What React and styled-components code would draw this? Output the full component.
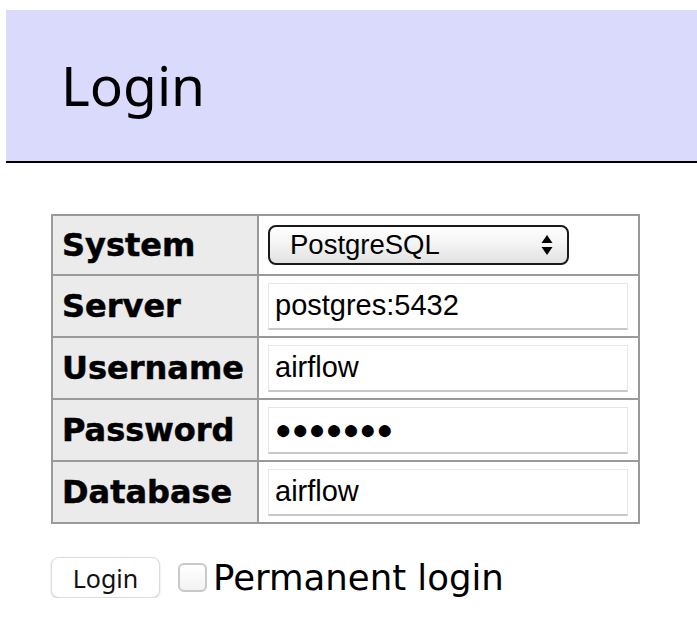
import React from "react";
import styled, { createGlobalStyle } from "styled-components";

const Global = createGlobalStyle`
  html, body { margin: 0; padding: 0; background: #fff; }
  body { font-family: "DejaVu Sans", Verdana, sans-serif; color: #000; }
`;

const Page = styled.div`
  padding: 10px 0 0 6px;
`;

const Header = styled.h2`
  margin: 0;
  height: 153px;
  box-sizing: border-box;
  padding: 0 0 2px 55px;
  display: flex;
  align-items: center;
  background: #dadafc;
  border-bottom: 2px solid #000;
  font-family: "Noto Sans", "Open Sans", sans-serif;
  font-weight: 400;
  font-size: 55px;
  line-height: 1;
`;

const Form = styled.form`
  margin: 51px 0 0 45px;
`;

const Table = styled.table`
  border-collapse: collapse;
  width: 589px;
  border: 2px solid #9a9a9a;
`;

const Row = styled.tr`
  height: ${(p) => (p.$first ? "60px" : "62px")};
`;

const Label = styled.th`
  width: 206px;
  box-sizing: border-box;
  padding: 0 8px 0 9px;
  text-align: left;
  background: #ebebeb;
  border: 2px solid #9a9a9a;
  font-family: "DejaVu Sans", Verdana, sans-serif;
  font-weight: 700;
  font-size: 32px;
  -webkit-text-stroke: 0.5px #000;
  white-space: nowrap;
`;

const Cell = styled.td`
  padding: 0 10px 0 9px;
  border: 2px solid #9a9a9a;
`;

const Input = styled.input`
  display: block;
  width: 360px;
  height: 47px;
  box-sizing: border-box;
  margin: 0;
  padding: 0 6px;
  border: 1px solid #e6e6e6;
  border-bottom: 2px solid #c8c8c8;
  background: #fff;
  font-family: "Liberation Sans", Arial, sans-serif;
  font-size: ${(p) => (p.$dots ? "28px" : "29px")};
  color: #000;
  outline: none;
`;

const SelectBox = styled.div`
  width: 301px;
  height: 40px;
  box-sizing: border-box;
  display: flex;
  align-items: center;
  justify-content: space-between;
  padding: 0 14px 0 20px;
  border: 2px solid #1a1a1a;
  border-radius: 8px;
  background: linear-gradient(#ffffff 0%, #f4f4f4 45%, #e2e2e2 100%);
  font-family: "Liberation Sans", Arial, sans-serif;
  font-size: 27.5px;
`;

const Footer = styled.div`
  display: flex;
  align-items: center;
  margin-top: 33px;
`;

const Button = styled.button`
  width: 109px;
  height: 41px;
  box-sizing: border-box;
  margin: 0;
  padding: 0;
  border: 1px solid #dcdcdc;
  border-radius: 8px;
  background: #fff;
  box-shadow: 0 1px 2px rgba(0,0,0,0.18);
  font-family: "Noto Sans", "Open Sans", sans-serif;
  font-size: 25px;
  color: #111;
`;

const CheckLabel = styled.label`
  display: flex;
  align-items: center;
  margin-left: 18px;
  font-family: "DejaVu Sans", Verdana, sans-serif;
  font-size: 35.5px;
  line-height: 1;
`;

const Check = styled.span`
  width: 29px;
  height: 29px;
  box-sizing: border-box;
  border: 2px solid #c9c9c9;
  border-radius: 6px;
  background: linear-gradient(#fff, #f3f3f3);
  margin-right: 6px;
`;

const Arrows = () => (
  <svg width="12" height="22" viewBox="0 0 12 22">
    <path d="M6 1 L11.5 9 H0.5 Z" fill="#000" />
    <path d="M6 21 L11.5 13 H0.5 Z" fill="#000" />
  </svg>
);

export default function App() {
  return (
    <>
      <Global />
      <Page>
        <Header>Login</Header>
        <Form onSubmit={(e) => e.preventDefault()}>
          <Table>
            <tbody>
              <Row $first>
                <Label>System</Label>
                <Cell>
                  <SelectBox>
                    <span>PostgreSQL</span>
                    <Arrows />
                  </SelectBox>
                </Cell>
              </Row>
              <Row>
                <Label>Server</Label>
                <Cell><Input defaultValue="postgres:5432" /></Cell>
              </Row>
              <Row>
                <Label>Username</Label>
                <Cell><Input defaultValue="airflow" /></Cell>
              </Row>
              <Row>
                <Label>Password</Label>
                <Cell><Input $dots readOnly value={"\u25CF\u25CF\u25CF\u25CF\u25CF\u25CF\u25CF"} /></Cell>
              </Row>
              <Row>
                <Label>Database</Label>
                <Cell><Input defaultValue="airflow" /></Cell>
              </Row>
            </tbody>
          </Table>
          <Footer>
            <Button type="submit">Login</Button>
            <CheckLabel>
              <Check />
              Permanent login
            </CheckLabel>
          </Footer>
        </Form>
      </Page>
    </>
  );
}
